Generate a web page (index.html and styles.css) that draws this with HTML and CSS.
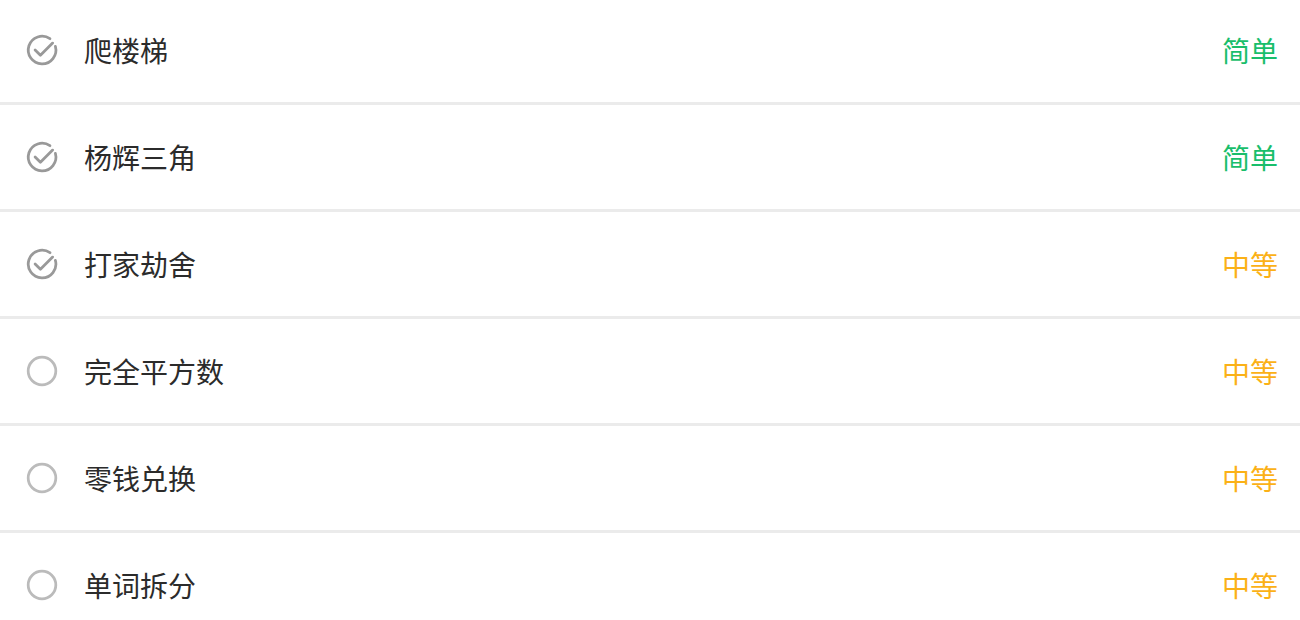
FILE: index.html
```html
<!DOCTYPE html>
<html lang="zh-CN">
<head>
  <meta charset="UTF-8">
  <meta name="viewport" content="width=device-width, initial-scale=1.0">
  <title>题目列表</title>
  <link rel="stylesheet" href="styles.css">
</head>
<body>

<ul class="problem-list">
  <li class="problem">
    <svg class="status done" viewBox="0 0 32 32"><path d="M23.5 5.4 A13 13 0 1 0 28.6 12.6"/><path d="M9.5 16 L14.5 21 L26 9.5"/></svg>
    <span class="title">爬楼梯</span>
    <span class="level easy">简单</span>
  </li>
  <li class="problem">
    <svg class="status done" viewBox="0 0 32 32"><path d="M23.5 5.4 A13 13 0 1 0 28.6 12.6"/><path d="M9.5 16 L14.5 21 L26 9.5"/></svg>
    <span class="title">杨辉三角</span>
    <span class="level easy">简单</span>
  </li>
  <li class="problem">
    <svg class="status done" viewBox="0 0 32 32"><path d="M23.5 5.4 A13 13 0 1 0 28.6 12.6"/><path d="M9.5 16 L14.5 21 L26 9.5"/></svg>
    <span class="title">打家劫舍</span>
    <span class="level medium">中等</span>
  </li>
  <li class="problem">
    <svg class="status todo" viewBox="0 0 32 32"><circle cx="16" cy="16" r="13"/></svg>
    <span class="title">完全平方数</span>
    <span class="level medium">中等</span>
  </li>
  <li class="problem">
    <svg class="status todo" viewBox="0 0 32 32"><circle cx="16" cy="16" r="13"/></svg>
    <span class="title">零钱兑换</span>
    <span class="level medium">中等</span>
  </li>
  <li class="problem">
    <svg class="status todo" viewBox="0 0 32 32"><circle cx="16" cy="16" r="13"/></svg>
    <span class="title">单词拆分</span>
    <span class="level medium">中等</span>
  </li>
</ul>

</body>
</html>
```

FILE: styles.css
```css
body {
  margin: 0;
  background-color: #fff;
  font-family: "Noto Sans CJK SC", "Noto Sans", sans-serif;
  color: #333;
  overflow: hidden;
}

.problem-list {
  list-style: none;
  margin: -2px 0 0;
  padding: 0;
}

.problem {
  display: flex;
  align-items: center;
  height: 104px;
  padding: 0 22px 0 25px;
  border-bottom: 3px solid #ebebeb;
}

.status {
  width: 34px;
  height: 34px;
  flex-shrink: 0;
  fill: none;
  stroke-width: 2.6;
  stroke-linecap: round;
  stroke-linejoin: round;
}

.status.done {
  stroke: #999;
}

.status.todo {
  stroke: #bbb;
}

.title {
  flex: 1;
  margin-left: 25px;
  font-size: 28px;
  color: #2b2b2b;
}

.level {
  font-size: 28px;
}

.level.easy {
  color: #19be6b;
}

.level.medium {
  color: #fbb117;
}
```
